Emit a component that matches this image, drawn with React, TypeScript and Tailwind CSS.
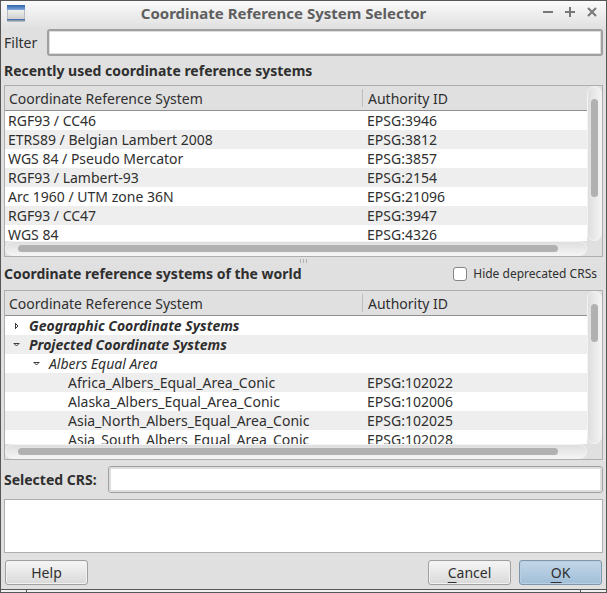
import type { ReactNode } from "react";

type Row = {
  name: string;
  id?: string;
  level?: 0 | 1 | 2;
  open?: boolean;
};

const recent: Row[] = [
  { name: "RGF93 / CC46", id: "EPSG:3946" },
  { name: "ETRS89 / Belgian Lambert 2008", id: "EPSG:3812" },
  { name: "WGS 84 / Pseudo Mercator", id: "EPSG:3857" },
  { name: "RGF93 / Lambert-93", id: "EPSG:2154" },
  { name: "Arc 1960 / UTM zone 36N", id: "EPSG:21096" },
  { name: "RGF93 / CC47", id: "EPSG:3947" },
  { name: "WGS 84", id: "EPSG:4326" },
];

const world: Row[] = [
  { name: "Geographic Coordinate Systems", level: 0, open: false },
  { name: "Projected Coordinate Systems", level: 0, open: true },
  { name: "Albers Equal Area", level: 1, open: true },
  { name: "Africa_Albers_Equal_Area_Conic", id: "EPSG:102022", level: 2 },
  { name: "Alaska_Albers_Equal_Area_Conic", id: "EPSG:102006", level: 2 },
  { name: "Asia_North_Albers_Equal_Area_Conic", id: "EPSG:102025", level: 2 },
  { name: "Asia_South_Albers_Equal_Area_Conic", id: "EPSG:102028", level: 2 },
];

const levelClass = [
  "pl-2 font-bold italic",
  "pl-7 italic",
  "pl-[63px]",
];

function Arrow({ open }: { open: boolean }) {
  return (
    <button
      type="button"
      aria-label={open ? "Collapse" : "Expand"}
      className="mr-2 flex size-2 items-center justify-center"
    >
      <svg width="8" height="8" viewBox="0 0 8 8" fill="none" stroke="#3c3c3c">
        {open ? <path d="M0.5 2.5h6M1.5 3l2 2 2-2" /> : <path d="M2.5 1v6M3 2l2 2-2 2" />}
      </svg>
    </button>
  );
}

function CrsTable({
  rows,
  label,
  viewClass,
  thumbClass,
}: {
  rows: Row[];
  label: string;
  viewClass: string;
  thumbClass: string;
}) {
  return (
    <div className="border border-[#aeaeae]">
      <div className="flex">
        <div className={`min-w-0 flex-1 overflow-hidden bg-white ${viewClass}`}>
          <table aria-label={label} className="w-full table-fixed border-separate border-spacing-0">
            <thead>
              <tr className="h-[25px] bg-[#e0e0e0] text-left">
                <th className="w-[358px] border-b border-[#8f8f8f] p-0 font-normal">
                  <div className="border-r border-[#bdbdbd] pt-0.5 pl-1 leading-4">
                    Coordinate Reference System
                  </div>
                </th>
                <th className="border-b border-[#8f8f8f] p-0 pt-0.5 pl-[5px] font-normal leading-4">
                  Authority ID
                </th>
              </tr>
            </thead>
            <tbody>
              {rows.map((row) => (
                <tr key={row.name} className="h-[19px] even:bg-[#eeeeee]">
                  <td className="p-0 leading-[19px]">
                    <div
                      className={`flex items-center whitespace-nowrap ${
                        row.level === undefined ? "pl-[3px]" : levelClass[row.level]
                      }`}
                    >
                      {row.open !== undefined && <Arrow open={row.open} />}
                      {row.name}
                    </div>
                  </td>
                  <td className="p-0 pl-1 leading-[19px]">{row.id}</td>
                </tr>
              ))}
            </tbody>
          </table>
        </div>
        <div className="w-[15px] rounded-full border border-[#f4f4f4] bg-linear-to-r from-[#dedede] to-[#f4f4f4] px-[3px] pt-3">
          <div className={`w-[7px] rounded-full bg-[#b1b1b1] ${thumbClass}`} />
        </div>
      </div>
      <div className="pr-[15px]">
        <div className="h-[15px] rounded-full border border-[#f4f4f4] bg-linear-to-b from-[#dedede] to-[#f4f4f4] pt-[3px] pr-7 pl-3">
          <div className="h-[7px] rounded-full bg-[#b1b1b1]" />
        </div>
      </div>
    </div>
  );
}

function PushButton({ primary = false, children }: { primary?: boolean; children: ReactNode }) {
  const tone = primary
    ? "border-[#8097ab] from-[#c3d6e7] to-[#a0bfd8] shadow-[inset_0_0_0_1px_#b9d0e3]"
    : "border-[#a0a0a0] from-[#f6f6f6] to-[#d9d9d9] shadow-[inset_0_0_0_1px_#f1f1f1]";
  return (
    <button
      type="button"
      className={`h-[25px] w-[83px] rounded-[3px] border bg-linear-to-b leading-none ${tone}`}
    >
      {children}
    </button>
  );
}

export default function App() {
  return (
    <div className="flex min-h-screen flex-col bg-[#e0e0e0] font-['Noto_Sans','Open_Sans',sans-serif] text-sm text-[#2f2f2f]">
      <main className="flex flex-1 flex-col border border-[#565656]">
        <header className="flex h-7 items-center bg-linear-to-b from-[#fafafa] to-[#e0e0e0] pr-2 pb-1 pl-1.5">
          <svg width="18" height="17" viewBox="0 0 18 17" aria-hidden="true">
            <defs>
              <linearGradient id="bar" x2="0" y2="1">
                <stop stopColor="#2f63a8" />
                <stop offset="1" stopColor="#7fa8dc" />
              </linearGradient>
              <linearGradient id="pane" x2="0" y2="1">
                <stop stopColor="#f0f0ee" />
                <stop offset="1" stopColor="#cfcfcf" />
              </linearGradient>
            </defs>
            <rect width="18" height="17" rx="1" fill="#b4bac2" />
            <rect x="1" y="5" width="16" height="9" fill="url(#pane)" />
            <rect width="18" height="5" fill="url(#bar)" />
            <rect y="14" width="18" height="1" fill="#4774ae" />
            <rect y="15" width="18" height="1" fill="#8795a8" />
          </svg>
          <h1 className="flex-1 text-center text-[15px] leading-5 font-bold text-[#5e5e5e]">
            Coordinate Reference System Selector
          </h1>
          <div className="flex gap-2.5">
            <button type="button" aria-label="Minimize">
              <svg width="12" height="12" stroke="#777" strokeWidth="2">
                <path d="M1 5h10" />
              </svg>
            </button>
            <button type="button" aria-label="Maximize">
              <svg width="12" height="12" stroke="#777" strokeWidth="2">
                <path d="M1 5h10M6 0v10" />
              </svg>
            </button>
            <button type="button" aria-label="Close">
              <svg width="12" height="12" stroke="#777" strokeWidth="2">
                <path d="M2 1l8 8M10 1l-8 8" />
              </svg>
            </button>
          </div>
        </header>

        <div className="flex flex-1 flex-col px-[3px]">
          <div className="flex items-center">
            <label htmlFor="filter" className="w-[43px]">
              Filter
            </label>
            <input
              id="filter"
              type="text"
              className="h-[27px] min-w-0 flex-1 rounded-[3px] border-2 border-[#a0a0a0] bg-white px-1 shadow-[inset_0_0_0_1px_#dedede] outline-none"
            />
          </div>

          <h2 className="flex h-[29px] items-center font-bold">
            Recently used coordinate reference systems
          </h2>
          <CrsTable
            rows={recent}
            label="Recently used coordinate reference systems"
            viewClass="h-[155px]"
            thumbClass="h-[98px]"
          />

          <div className="flex h-2 items-center justify-center gap-0.5" aria-hidden="true">
            <span className="h-1 w-px bg-[#b0b0b0]" />
            <span className="h-1 w-px bg-[#b0b0b0]" />
            <span className="h-1 w-px bg-[#b0b0b0]" />
          </div>

          <div className="flex h-[25px] items-start justify-between pr-1.5">
            <h2 className="leading-[18px] font-bold">Coordinate reference systems of the world</h2>
            <label className="flex items-center gap-1.5 text-xs leading-[18px]">
              <input
                type="checkbox"
                className="size-3.5 appearance-none rounded-[3px] border border-[#858585] bg-white"
              />
              Hide deprecated CRSs
            </label>
          </div>
          <CrsTable
            rows={world}
            label="Coordinate reference systems of the world"
            viewClass="h-[153px]"
            thumbClass="h-[38px]"
          />

          <div className="mt-1.5 flex items-center">
            <label htmlFor="selected" className="w-[104px] font-bold">
              Selected CRS:
            </label>
            <input
              id="selected"
              type="text"
              className="h-[27px] min-w-0 flex-1 rounded-[3px] border border-[#a0a0a0] bg-white px-1 shadow-[inset_0_0_0_2px_#dedede] outline-none"
            />
          </div>
          <textarea
            aria-label="Selected CRS parameters"
            className="mt-1.5 min-h-[54px] flex-1 resize-none border border-[#aeaeae] bg-white outline-none"
          />

          <footer className="flex gap-2 px-px pt-[7px] pb-1">
            <PushButton>Help</PushButton>
            <span className="flex-1" />
            <PushButton>
              <span className="underline underline-offset-4">C</span>ancel
            </PushButton>
            <PushButton primary>
              <span className="underline underline-offset-4">O</span>K
            </PushButton>
          </footer>
        </div>
      </main>
      <div className="flex h-[3px] gap-px border-x border-b border-[#565656] bg-[#565656]" aria-hidden="true">
        <span className="w-[25px] bg-[#f0f0f0]" />
        <span className="flex-1 bg-[#f0f0f0]" />
        <span className="w-[25px] bg-[#f0f0f0]" />
      </div>
    </div>
  );
}
